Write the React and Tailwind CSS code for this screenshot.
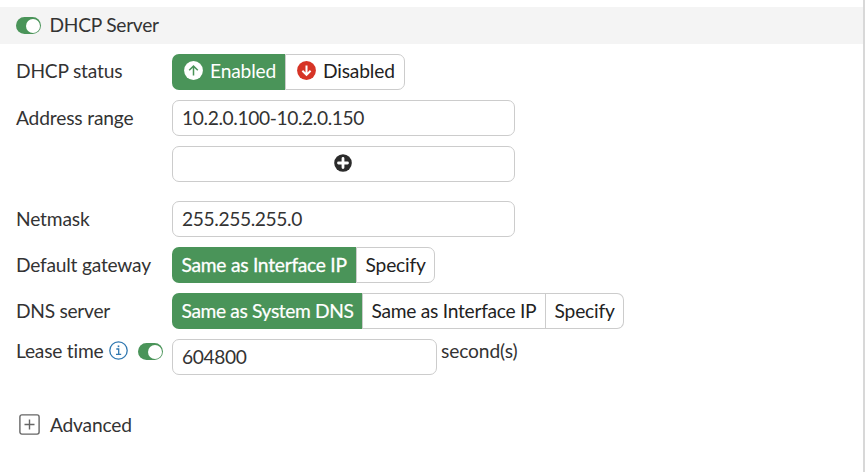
function Toggle() {
  return (
    <span className="flex h-[17px] w-[25px] shrink-0 items-center justify-end rounded-full bg-[#4a9459] py-[1.5px] pr-px">
      <span className="size-[14px] rounded-full bg-white" />
    </span>
  );
}

function ArrowBadge({ down, fill, stroke }) {
  return (
    <svg className="ml-[2px] mr-[0.5px] size-[19px] shrink-0 -translate-y-px" viewBox="0 0 19 19" fill="none">
      <circle cx="9.5" cy="9.5" r="9.4" fill={fill} />
      <path
        d={down ? 'M9.5 4.5v9.3M5.4 9.8l4.1 4.1 4.1-4.1' : 'M9.5 14.4V5.2M5.2 9.3l4.3-4.2 4.3 4.2'}
        stroke={stroke}
        strokeWidth={down ? 2 : 1.5}
      />
    </svg>
  );
}

function Row({ label, className = '', labelClass = '', children }) {
  return (
    <div className={`flex h-[36px] ${className}`}>
      <div className={`w-[156px] shrink-0 leading-[36px] ${labelClass}`}>{label}</div>
      {children}
    </div>
  );
}

function Field({ value, width = 'w-[343px]' }) {
  return (
    <div className={`flex h-[36px] shrink-0 items-center rounded-[7px] border border-[#ccc] pl-[9px] tracking-[-0.38px] ${width}`}>
      {value}
    </div>
  );
}

function Segments({ items }) {
  return (
    <div className="flex h-[36px]">
      {items.map((item, i) => (
        <div
          key={item.text}
          className={`flex shrink-0 items-center gap-[7px] whitespace-nowrap ${item.width} ${item.className || ''} ${
            i === 0
              ? 'rounded-l-[7px] bg-[#4a9459] pl-[9.5px] text-white'
              : 'border-y border-r border-[#ccc] pl-[8.5px] text-[#222]'
          } ${i === 1 ? 'border-l' : ''} ${i > 0 && i === items.length - 1 ? 'rounded-r-[7px]' : ''}`}
        >
          {item.icon}
          {item.text}
        </div>
      ))}
    </div>
  );
}

export default function App() {
  return (
    <div className="h-[472px] w-[865px] overflow-hidden bg-white font-['Lato',sans-serif] text-[19.2px] tracking-[-0.16px] text-[#333]">
      <div className="h-full w-full border-r-2 border-[#d8d8d8] pt-[7px]">
        <div className="flex h-[37px] items-center gap-[8.5px] bg-[#f4f4f4] pl-[16px]">
          <Toggle />
          <span className="pb-[1px] tracking-[-0.26px]">DHCP Server</span>
        </div>
        <div className="flex flex-col pl-[16px] pt-[10px]">
          <Row label="DHCP status" labelClass="-mt-px tracking-[-0.2px]">
            <Segments
              items={[
                { text: 'Enabled', width: 'w-[113px]', className: 'pb-[2px]', icon: <ArrowBadge fill="#fff" stroke="#4a9459" /> },
                { text: 'Disabled', width: 'w-[120px]', className: 'pb-[2px]', icon: <ArrowBadge down fill="#d63426" stroke="#fff" /> },
              ]}
            />
          </Row>
          <Row label="Address range" className="mt-[10px]">
            <Field value="10.2.0.100-10.2.0.150" />
          </Row>
          <div className="ml-[156px] mt-[10px] flex h-[36px] w-[343px] items-center justify-center rounded-[7px] border border-[#ccc] pb-[2px] pr-px">
            <svg className="size-[18px]" viewBox="0 0 18 18">
              <circle cx="9" cy="9" r="8.8" fill="#2b2b2b" />
              <path d="M9 4.5v9M4.5 9h9" stroke="#fff" strokeWidth="2.8" strokeLinecap="round" />
            </svg>
          </div>
          <Row label="Netmask" className="mt-[19px]">
            <Field value="255.255.255.0" />
          </Row>
          <Row label="Default gateway" labelClass="tracking-[-0.22px]" className="mt-[10px]">
            <Segments
              items={[
                { text: 'Same as Interface IP', width: 'w-[184px]', className: 'tracking-[-0.25px] [-webkit-text-stroke:0.3px_white]' },
                { text: 'Specify', width: 'w-[79px]' },
              ]}
            />
          </Row>
          <Row label="DNS server" labelClass="tracking-[-0.28px]" className="mt-[10px]">
            <Segments
              items={[
                { text: 'Same as System DNS', width: 'w-[190px]', className: 'tracking-[-0.36px] [-webkit-text-stroke:0.2px_white]' },
                { text: 'Same as Interface IP', width: 'w-[184px]', className: 'tracking-[-0.27px]' },
                { text: 'Specify', width: 'w-[78px]' },
              ]}
            />
          </Row>
          <div className="mt-[10px] flex items-start">
            <div className="flex h-[25px] w-[156px] items-center">
              <span className="w-[93px] whitespace-nowrap pb-[2px] leading-[23px] tracking-[-0.22px]">Lease time</span>
              <svg className="mr-[10px] size-[19px] shrink-0 -translate-y-px" viewBox="0 0 19 19" fill="none" stroke="#2f77b0">
                <circle cx="9.5" cy="9.5" r="8.7" strokeWidth="1.3" />
                <path d="M7.3 8h2.4v5.3M7 13.3h5.2" strokeWidth="1.3" />
                <path d="M8.7 5.3h1.6" strokeWidth="1.7" />
              </svg>
              <Toggle />
            </div>
            <Field value="604800" width="w-[265px]" />
            <span className="pl-[4px] leading-[23px] tracking-[-0.12px]">second(s)</span>
          </div>
          <div className="mt-[35px] flex h-[29px] items-center pl-[3px]">
            <svg className="mr-[10px] size-[21px]" viewBox="0 0 21 21" fill="none" stroke="#666">
              <rect x="0.9" y="0.9" width="19.2" height="19.2" rx="2" strokeWidth="1.4" />
              <path d="M10.5 5.5v10M5.5 10.5h10" strokeWidth="1.4" />
            </svg>
            <span className="pt-[2px] tracking-[-0.2px]">Advanced</span>
          </div>
        </div>
      </div>
    </div>
  );
}
